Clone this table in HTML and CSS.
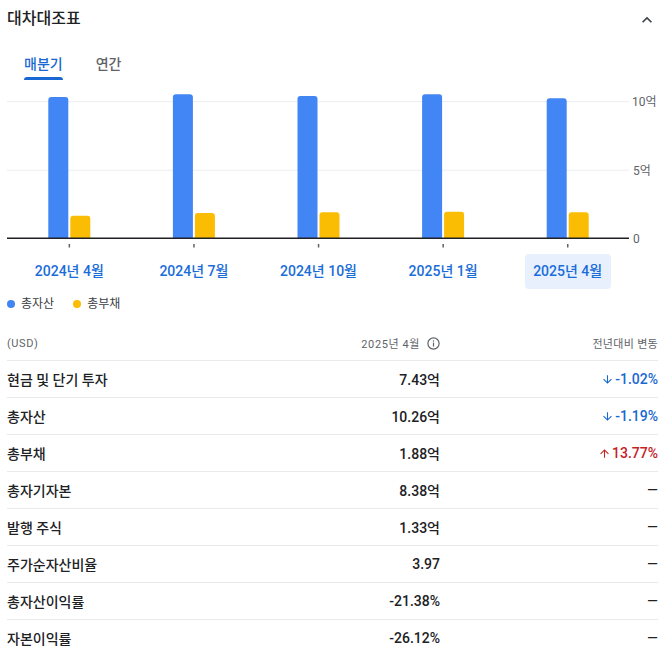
FILE: index.html
```html
<!DOCTYPE html>
<html lang="ko">
<head>
<meta charset="utf-8">
<title>대차대조표</title>
<link rel="stylesheet" href="styles.css">
</head>
<body>
<div class="card">
  <div class="header">
    <h2 class="title">대차대조표</h2>
    <svg class="chev" viewBox="0 0 24 24" width="20" height="20"><path d="M7.41 15.41L12 10.83l4.59 4.58L18 14l-6-6-6 6z" fill="#3c4043"/></svg>
  </div>
  <div class="tabs">
    <div class="tab active"><span>매분기</span></div>
    <div class="tab"><span>연간</span></div>
  </div>
  <svg class="chart" width="651" height="160" viewBox="0 0 651 160">
    <line x1="0" y1="11.7" x2="622" y2="11.7" stroke="#ebedef" stroke-width="1"/>
    <line x1="0" y1="80.2" x2="622" y2="80.2" stroke="#ebedef" stroke-width="1"/>
    <text class="ylab" x="625" y="12">10억</text>
    <text class="ylab" x="626" y="80.5">5억</text>
    <text class="ylab" x="626" y="148.5">0</text>
    <g fill="#4285f4">
      <path d="M41.3 148 V10 Q41.3 7 44.3 7 H58.3 Q61.3 7 61.3 10 V148 Z"/>
      <path d="M165.9 148 V7.3 Q165.9 4.3 168.9 4.3 H182.9 Q185.9 4.3 185.9 7.3 V148 Z"/>
      <path d="M290.5 148 V9 Q290.5 6 293.5 6 H307.5 Q310.5 6 310.5 9 V148 Z"/>
      <path d="M415.1 148 V7.3 Q415.1 4.3 418.1 4.3 H432.1 Q435.1 4.3 435.1 7.3 V148 Z"/>
      <path d="M539.7 148 V11.3 Q539.7 8.3 542.7 8.3 H556.7 Q559.7 8.3 559.7 11.3 V148 Z"/>
    </g>
    <g fill="#fbbc04">
      <path d="M63.3 148 V128.7 Q63.3 125.7 66.3 125.7 H80.3 Q83.3 125.7 83.3 128.7 V148 Z"/>
      <path d="M187.9 148 V126 Q187.9 123 190.9 123 H204.9 Q207.9 123 207.9 126 V148 Z"/>
      <path d="M312.5 148 V125.3 Q312.5 122.3 315.5 122.3 H329.5 Q332.5 122.3 332.5 125.3 V148 Z"/>
      <path d="M437.1 148 V124.7 Q437.1 121.7 440.1 121.7 H454.1 Q457.1 121.7 457.1 124.7 V148 Z"/>
      <path d="M561.7 148 V125.3 Q561.7 122.3 564.7 122.3 H578.7 Q581.7 122.3 581.7 125.3 V148 Z"/>
    </g>
    <line x1="0" y1="148.3" x2="622" y2="148.3" stroke="#202124" stroke-width="1.6"/>
    <g fill="#5f6368">
      <rect x="61.6" y="154" width="1.5" height="3.5"/>
      <rect x="186.2" y="154" width="1.5" height="3.5"/>
      <rect x="310.8" y="154" width="1.5" height="3.5"/>
      <rect x="435.4" y="154" width="1.5" height="3.5"/>
      <rect x="560" y="154" width="1.5" height="3.5"/>
    </g>
  </svg>
  <div class="xaxis">
    <div class="xcell"><span class="xlabel">2024년 4월</span></div>
    <div class="xcell"><span class="xlabel">2024년 7월</span></div>
    <div class="xcell"><span class="xlabel">2024년 10월</span></div>
    <div class="xcell"><span class="xlabel">2025년 1월</span></div>
    <div class="xcell"><span class="xlabel sel">2025년 4월</span></div>
  </div>
  <div class="legend">
    <div class="legend-item"><span class="dot dot-blue"></span><span>총자산</span></div>
    <div class="legend-item"><span class="dot dot-yellow"></span><span>총부채</span></div>
  </div>
  <div class="table">
    <div class="thead">
      <div>(USD)</div>
      <div class="hval">2025년 4월
        <svg class="info" viewBox="0 0 13 13" width="13" height="13"><circle cx="6.5" cy="6.5" r="5.6" fill="none" stroke="#5f6368" stroke-width="1.2"/><rect x="5.9" y="5.6" width="1.2" height="4" fill="#5f6368"/><circle cx="6.5" cy="3.9" r="0.75" fill="#5f6368"/></svg>
      </div>
      <div class="hchg">전년대비 변동</div>
    </div>
    <div class="row"><div>현금 및 단기 투자</div><div class="val">7.43억</div><div class="chg down"><svg class="arr" viewBox="0 0 24 24" width="13" height="13"><path d="M20 12l-1.41-1.41L13 16.17V4h-2v12.17l-5.58-5.59L4 12l8 8 8-8z"/></svg>-1.02%</div></div>
    <div class="row"><div>총자산</div><div class="val">10.26억</div><div class="chg down"><svg class="arr" viewBox="0 0 24 24" width="13" height="13"><path d="M20 12l-1.41-1.41L13 16.17V4h-2v12.17l-5.58-5.59L4 12l8 8 8-8z"/></svg>-1.19%</div></div>
    <div class="row"><div>총부채</div><div class="val">1.88억</div><div class="chg up"><svg class="arr" viewBox="0 0 24 24" width="13" height="13"><path d="M4 12l1.41 1.41L11 7.83V20h2V7.83l5.58 5.59L20 12l-8-8-8 8z"/></svg>13.77%</div></div>
    <div class="row"><div>총자기자본</div><div class="val">8.38억</div><div class="chg"><span class="dash">—</span></div></div>
    <div class="row"><div>발행 주식</div><div class="val">1.33억</div><div class="chg"><span class="dash">—</span></div></div>
    <div class="row"><div>주가순자산비율</div><div class="val">3.97</div><div class="chg"><span class="dash">—</span></div></div>
    <div class="row"><div>총자산이익률</div><div class="val">-21.38%</div><div class="chg"><span class="dash">—</span></div></div>
    <div class="row"><div>자본이익률</div><div class="val">-26.12%</div><div class="chg"><span class="dash">—</span></div></div>
  </div>
</div>
</body>
</html>
```
FILE: styles.css
```css
* { box-sizing: border-box; }
body {
  margin: 0;
  background: #fff;
  color: #202124;
  font-family: Roboto, "Noto Sans CJK KR", sans-serif;
}
.card {
  padding: 0 10px 0 7px;
}
.header {
  display: flex;
  justify-content: space-between;
  align-items: center;
  height: 37px;
}
.title {
  margin: 0;
  font-size: 16px;
  font-weight: 500;
  line-height: 20px;
}
.chev {
  display: block;
  margin-right: 1px;
  margin-top: 2px;
}
.tabs {
  display: flex;
  margin-top: 11px;
}
.tab {
  display: flex;
  flex-direction: column;
  padding: 6px 16px 0 17px;
  font-size: 14px;
  line-height: 20px;
  font-weight: 500;
  color: #5f6368;
}
.tab::after {
  content: "";
  display: block;
  height: 3px;
  margin-top: 3px;
  border-radius: 3px 3px 0 0;
  background: transparent;
}
.tab.active { color: #1967d2; }
.tab.active::after { background: #1967d2; }
.chart {
  display: block;
  margin-top: 10px;
}
.ylab {
  font-family: Roboto, "Noto Sans CJK KR", sans-serif;
  font-size: 12px;
  fill: #5f6368;
  dominant-baseline: central;
}
.xaxis {
  display: flex;
  width: 623px;
  margin-top: 4px;
}
.xcell {
  flex: 1;
  display: flex;
  justify-content: center;
}
.xlabel {
  display: block;
  height: 35px;
  line-height: 35px;
  padding: 0 8.5px;
  border-radius: 4px;
  font-size: 14px;
  font-weight: 500;
  color: #1a6dd8;
}
.xlabel.sel { background: #e8f0fe; }
.legend {
  display: flex;
  gap: 19px;
  margin-top: 7px;
  font-size: 12px;
  line-height: 16px;
  color: #3c4043;
}
.legend-item {
  display: flex;
  align-items: center;
  gap: 6px;
}
.dot {
  width: 8px;
  height: 8px;
  border-radius: 50%;
}
.dot-blue { background: #4285f4; }
.dot-yellow { background: #fbbc04; }
.table {
  margin-top: 14px;
}
.thead, .row {
  display: grid;
  grid-template-columns: 1fr 200px 218px;
  align-items: center;
}
.thead {
  height: 34px;
  font-size: 11px;
  letter-spacing: 0.6px;
  color: #5f6368;
}
.hval {
  display: flex;
  justify-content: flex-end;
  align-items: center;
  gap: 7px;
}
.info { display: block; }
.hchg { text-align: right; letter-spacing: 0.3px; }
.row {
  height: 37px;
  border-top: 1px solid #e8eaed;
  font-size: 14px;
  font-weight: 500;
}
.val { text-align: right; }
.chg {
  display: flex;
  justify-content: flex-end;
  align-items: center;
  gap: 1px;
}
.chg.down { color: #1967d2; fill: #1967d2; }
.chg.up { color: #c5221f; fill: #c5221f; }
.arr { display: block; }
.dash { font-size: 14px; font-weight: 400; }
```
